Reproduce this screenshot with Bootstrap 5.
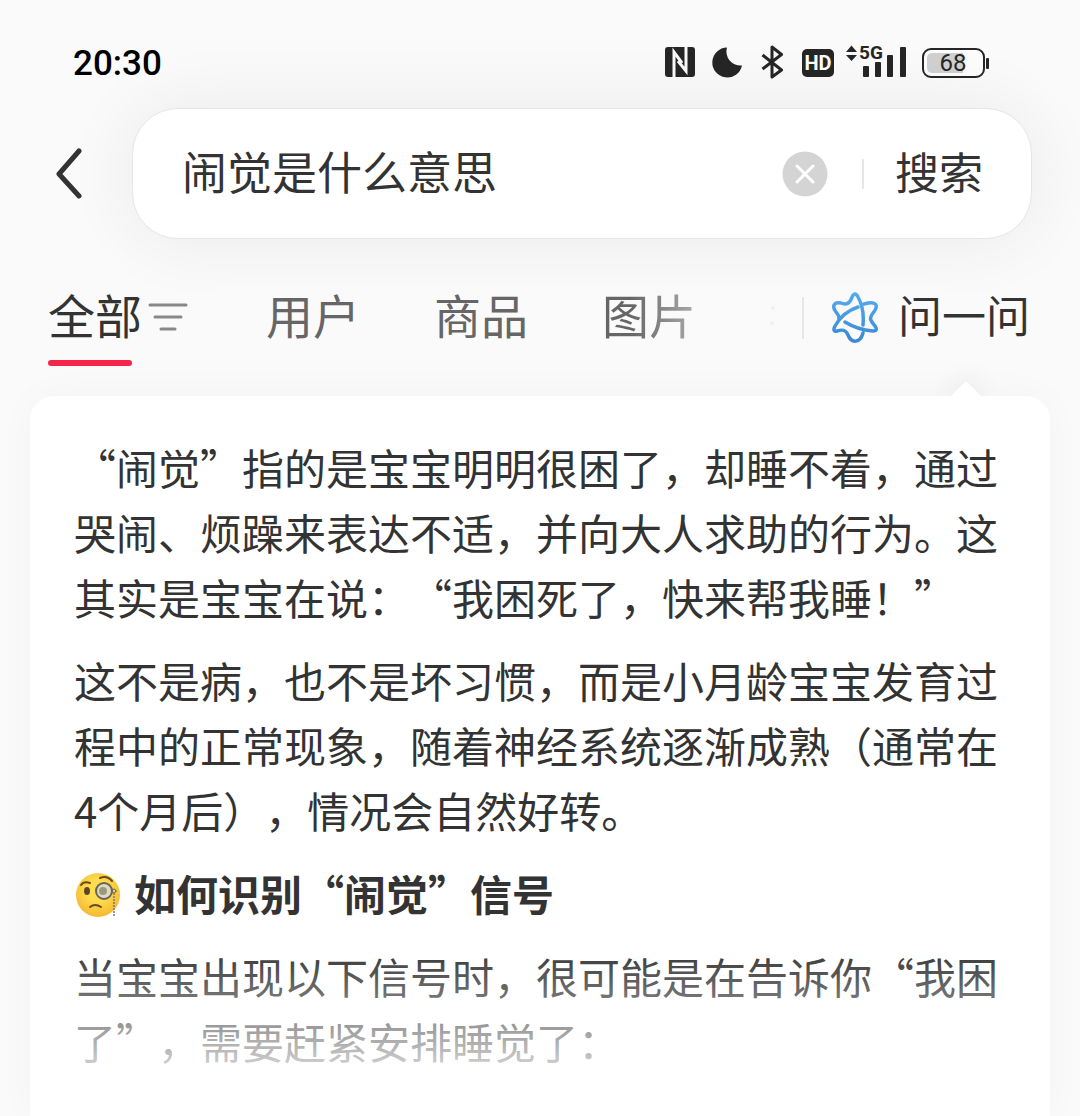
<!DOCTYPE html>
<html lang="zh-CN">
<head>
<meta charset="utf-8">
<meta name="viewport" content="width=device-width, initial-scale=1">
<title>闹觉是什么意思 - 搜索</title>
<link href="https://cdn.jsdelivr.net/npm/bootstrap@5.3.0/dist/css/bootstrap.min.css" rel="stylesheet">
<style>
  body { background: #fafafa; color: #333; font-family: "Noto Sans CJK SC", "Noto Sans", sans-serif; min-height: 100vh; text-spacing-trim: space-all; overflow-x: hidden; }
  .statusbar { height: 108px; padding: 18px 91px 0 73px; }
  .clock { padding-top: 2px; font: 500 35px/42px Roboto, sans-serif; color: #000; }
  .sys { gap: 16px; color: #262626; }
  .sys svg { display: block; }
  .search-row { padding: 0 48px; }
  .back { width: 84px; padding: 0 0 0 8px; border: 0; background: none; text-align: left; }
  .search-box { height: 131px; padding: 0 48px 0 49px; border: 1px solid #e6e6e6; border-radius: 46px; background: #fff; box-shadow: 0 0 72px rgba(0, 0, 0, .07); }
  .query { min-width: 0; padding: 0 0 6px; border: 0; outline: 0; background: none; font-size: 45px; line-height: 64px; color: #333; }
  .clear { width: 46px; height: 46px; padding: 0; border: 0; background: none; }
  .rule { width: 2px; height: 30px; margin: 0 31px 0 34px; background: #e6e6e6; }
  .go { padding: 0 0 6px; border: 0; background: none; font-size: 44px; line-height: 64px; color: #333; }
  .tabs-row { height: 157px; padding: 0 50px 0 48px; }
  .tab-link { font-size: 47px; line-height: 64px; color: #666; text-decoration: none; white-space: nowrap; padding-bottom: 8px; }
  .tab-link.current { position: relative; display: flex; align-items: center; padding: 0; color: #333; }
  .tab-link.current span, .ask span { padding-bottom: 8px; }
  .tab-link.current::after { content: ""; position: absolute; left: 0; bottom: -12px; width: 84px; height: 6px; border-radius: 3px; background: #f5264a; }
  .tab-list { gap: 74px; }
  .fade-tab { background: linear-gradient(90deg, #666 30%, #aaa); -webkit-background-clip: text; background-clip: text; color: transparent; }
  .divider { width: 2px; height: 42px; margin-right: 27px; background: #e6e6e6; }
  .ask { gap: 17px; font-size: 44px; line-height: 64px; color: #333; text-decoration: none; white-space: nowrap; }
  .answer { position: relative; margin: 0 30px; padding: 38px 44px 20px; border-radius: 24px 24px 0 0; background: #fff; box-shadow: 0 0 40px rgba(0, 0, 0, .03); }
  .notch { position: absolute; right: 69px; top: -15px; clip-path: inset(-20px -40px 0 -40px); }
  .notch svg { display: block; filter: drop-shadow(0 0 12px rgba(0, 0, 0, .14)); }
  .answer p { margin: 0 0 18px; font-size: 42px; line-height: 65px; }
  .answer .last-line { margin: 0; }
  .answer h2 { display: flex; align-items: center; gap: 14px; margin: 0 0 18px; font-size: 42px; line-height: 65px; font-weight: 700; }
  .veil { position: absolute; left: 0; right: 0; bottom: 0; height: 168px; background: linear-gradient(rgba(255, 255, 255, 0), #fff 92%); }
</style>
</head>
<body class="d-flex flex-column">
<header>
  <div class="statusbar d-flex align-items-center justify-content-between">
    <span class="clock">20:30</span>
    <div class="sys d-flex align-items-center">
      <svg width="241" height="48" viewBox="0 -5 241 48" fill="currentColor" role="img" aria-label="NFC HD 5G">
        <rect y="3" width="30" height="30" rx="3"/>
        <path d="M9 33V8L17 19M21 3V27L13 17" fill="none" stroke="#fafafa" stroke-width="3"/>
        <path d="M62 3.500A15 15 0 1 0 77 21.500A14 14 0 0 1 62 3.500Z"/>
        <path d="M97.500 11L116.500 26L107 33V3L116.500 10.500L97.500 25" fill="none" stroke="currentColor" stroke-width="3" stroke-linejoin="round"/>
        <rect x="137" y="5" width="32" height="28" rx="5"/>
        <text x="153" y="26" text-anchor="middle" font-family="Roboto" font-size="20" font-weight="700" fill="#fff">HD</text>
        <path d="M181 8L186.500 1.500L192 8ZM181 11L186.500 17L192 11Z"/>
        <text x="194" y="15" font-family="Roboto" font-size="19" font-weight="700">5G</text>
        <rect x="198" y="22" width="6" height="11" rx="1"/><rect x="210" y="18" width="6" height="15" rx="1"/><rect x="222" y="11" width="6" height="22" rx="1"/><rect x="235" y="3" width="6" height="30" rx="1"/>
      </svg>
      <svg width="67" height="36" viewBox="0 0 67 36" role="img" aria-label="68%">
        <rect x="1" y="4" width="61" height="28" rx="8" fill="#fcfcfc" stroke="#262626" stroke-width="2"/>
        <path d="M10 8H41V28H10A5 5 0 0 1 5 23V13A5 5 0 0 1 10 8Z" fill="#d0d0d0"/>
        <rect x="64" y="13" width="3" height="11" rx="1" fill="#262626"/>
        <text x="31" y="26" text-anchor="middle" font-family="Roboto" font-size="24" fill="#262626">68</text>
      </svg>
    </div>
  </div>
  <form class="search-row d-flex align-items-center" onsubmit="return false">
    <button class="back" type="button" aria-label="返回"><svg class="d-block" width="28" height="52" viewBox="0 0 28 52" fill="none" stroke="#333" stroke-width="5" stroke-linecap="round" stroke-linejoin="round"><path d="M23 3L3 26L23 48"/></svg></button>
    <div class="search-box flex-grow-1 d-flex align-items-center">
      <input class="query flex-grow-1" type="text" aria-label="搜索内容" value="闹觉是什么意思">
      <button class="clear" type="button" aria-label="清除"><svg class="d-block" width="46" height="46" viewBox="0 0 46 46"><circle cx="23" cy="23" r="22.500" fill="#d4d4d4"/><path d="M15 15L31 31M31 15L15 31" stroke="#fff" stroke-width="3" stroke-linecap="round"/></svg></button>
      <span class="rule"></span>
      <button class="go" type="submit">搜索</button>
    </div>
  </form>
  <div class="tabs-row d-flex align-items-center justify-content-between">
    <nav class="tab-list d-flex align-items-center" aria-label="分类">
      <a class="tab-link current" href="#"><span>全部</span><svg width="50" height="34" viewBox="0 0 50 34" stroke="#888" stroke-width="3" stroke-linecap="round"><path d="M8 4H44M13 16H39M19 28H33"/></svg></a>
      <a class="tab-link" href="#">用户</a>
      <a class="tab-link" href="#">商品</a>
      <a class="tab-link fade-tab" href="#">图片</a>
      <svg width="6" height="24" viewBox="0 0 6 24" fill="#f0f0f0" aria-hidden="true"><circle cx="3" cy="2" r="2"/><circle cx="2" cy="17" r="2"/></svg>
    </nav>
    <div class="d-flex align-items-center">
      <span class="divider"></span>
      <a class="ask d-flex align-items-center" href="#">
        <svg width="50" height="52" viewBox="0 0 50 52" fill="none" stroke="url(#sky)" stroke-width="3.500" stroke-linecap="round" stroke-linejoin="round">
          <defs><linearGradient id="sky" x1="0" y1="0" x2="0" y2="52" gradientUnits="userSpaceOnUse"><stop stop-color="#55acf2"/><stop offset="1" stop-color="#3b86d2"/></linearGradient></defs>
          <path d="M27 15C18 18 9 25 4 34C2 38 3 40 6 39C12 37 15 38 17 43C20 51 29 52 32 41M14 30C22 35 31 38 42 39C46 39 46 37 44 34C39 28 38 26 42 21C49 12 44 9 33 12M32 33C33 22 31 12 27 5C25 1 23 1 21 5C19 12 15 13 10 11C2 10 1 15 5 20C8 24 8 24 8 28"/>
        </svg>
        <span>问一问</span>
      </a>
    </div>
  </div>
</header>
<main class="answer flex-grow-1">
  <div class="notch"><svg width="30" height="15" viewBox="0 0 30 15" fill="#fff" aria-hidden="true"><path d="M0 15L13 2Q15 0 17 2L30 15Z"/></svg></div>
  <p>“闹觉”指的是宝宝明明很困了，却睡不着，通过哭闹、烦躁来表达不适，并向大人求助的行为。这其实是宝宝在说：“我困死了，快来帮我睡！”</p>
  <p>这不是病，也不是坏习惯，而是小月龄宝宝发育过程中的正常现象，随着神经系统逐渐成熟（通常在4个月后），情况会自然好转。</p>
  <h2>
    <svg width="46" height="54" viewBox="0 -5 46 54" role="img" aria-label="单片眼镜脸">
      <defs><radialGradient id="face" cx=".5" cy=".4" r=".6"><stop offset=".4" stop-color="#fddc4e"/><stop offset="1" stop-color="#f4b92f"/></radialGradient></defs>
      <circle cx="24" cy="24" r="22" fill="url(#face)"/>
      <g fill="none" stroke-linecap="round"><path d="M7 14Q10 10 16 12M26 7Q33 4 38 10M16 36Q21 32 27 36" stroke="#6b4b1d" stroke-width="2"/>
      <circle cx="30" cy="20" r="8" fill="#dedac0" stroke="#676558" stroke-width="2"/><circle cx="40" cy="20" r="2" stroke="#676558" stroke-width="1"/><path d="M40 23V46" stroke="#777" stroke-width="2" stroke-dasharray="0 3"/></g>
      <ellipse cx="13" cy="20" rx="3" ry="4" fill="#5c4527"/><circle cx="29" cy="20" r="4" fill="#9c9880"/>
    </svg>
    <span>如何识别“闹觉”信号</span>
  </h2>
  <p class="last-line">当宝宝出现以下信号时，很可能是在告诉你“我困了”，需要赶紧安排睡觉了：</p>
  <div class="veil"></div>
</main>
<script src="https://cdn.jsdelivr.net/npm/bootstrap@5.3.0/dist/js/bootstrap.bundle.min.js"></script>
</body>
</html>
